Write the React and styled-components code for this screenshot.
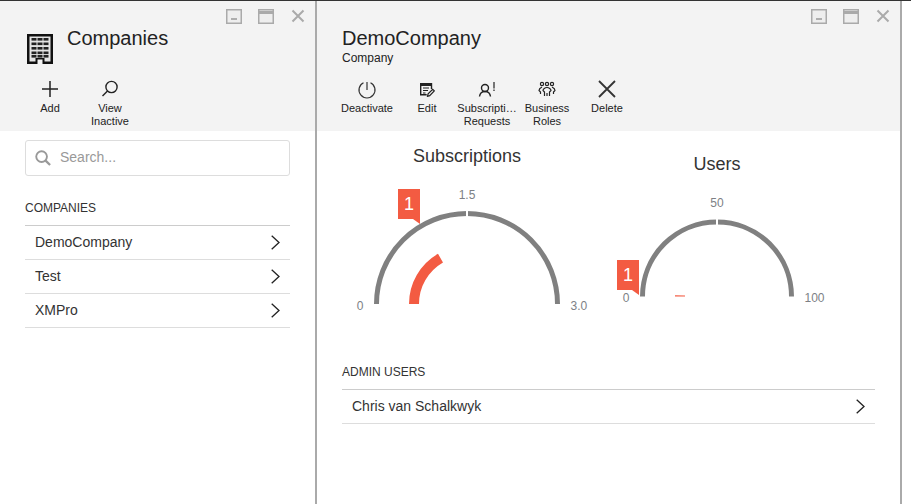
import React from 'react';
import styled, { createGlobalStyle } from 'styled-components';

const GlobalStyle = createGlobalStyle`
  html, body {
    margin: 0;
    padding: 0;
    height: 100%;
    overflow: hidden;
    background: #fff;
    font-family: 'Liberation Sans', Arial, sans-serif;
    color: #333;
  }
  #root {
    height: 100%;
  }
`;

const Page = styled.div`
  display: flex;
  width: 911px;
  height: 504px;
  box-sizing: border-box;
  border-top: 1px solid #333;
`;
const Panel = styled.section`
  display: flex;
  flex-direction: column;
  box-sizing: border-box;
  width: ${p => p.$width}px;
  border-right: 2px solid #aaa;
`;
const Header = styled.header`
  display: flex;
  flex-direction: column;
  box-sizing: border-box;
  height: 130px;
  flex: none;
  padding: 7px 0 0 25px;
  background: #f3f3f3;
`;
const WindowBar = styled.div`
  display: flex;
  justify-content: flex-end;
  align-items: center;
  gap: 16px;
  height: 16px;
  padding-right: 10px;
`;
const CloseGlyph = styled.svg`
  margin-left: 1px;
`;
const TitleRow = styled.div`
  display: flex;
  align-items: flex-start;
  gap: 14px;
  height: 44px;
  margin-top: 3px;
  padding-left: ${p => (p.$icon ? 2 : 0)}px;
`;
const BuildingBox = styled.div`
  padding-top: 7px;
  line-height: 0;
`;
const TitleText = styled.div`
  display: flex;
  flex-direction: column;
`;
const Title = styled.h1`
  margin: 0;
  font-size: 20px;
  font-weight: 400;
  line-height: 23px;
  color: #222;
`;
const Subtitle = styled.div`
  font-size: 12px;
  line-height: 16px;
  color: #222;
`;
const Toolbar = styled.div`
  display: flex;
  margin-left: -5px;
  margin-top: 6px;
`;
const ToolButton = styled.div`
  display: flex;
  flex-direction: column;
  align-items: center;
  width: 60px;
`;
const ToolIcon = styled.div`
  display: flex;
  align-items: center;
  justify-content: center;
  height: 24px;
  margin-bottom: 1px;
`;
const ToolLabel = styled.div`
  white-space: nowrap;
  font-size: 11px;
  line-height: 13px;
  text-align: center;
  color: #222;
`;
const Body = styled.div`
  display: flex;
  flex-direction: column;
  padding: ${p => p.$top}px 25px 0;
`;
const SearchBox = styled.div`
  display: flex;
  align-items: center;
  gap: 9px;
  box-sizing: border-box;
  height: 36px;
  padding-left: 9px;
  border: 1px solid #ddd;
  border-radius: 3px;
`;
const SearchText = styled.span`
  padding-bottom: 2px;
  font-size: 14px;
  color: #999;
`;
const SectionLabel = styled.h2`
  margin: ${p => p.$top}px 0 10px;
  font-size: 12px;
  font-weight: 400;
  line-height: 14px;
  color: #333;
`;
const List = styled.div`
  border-top: 1px solid #ccc;
`;
const Row = styled.div`
  display: flex;
  align-items: center;
  justify-content: space-between;
  box-sizing: border-box;
  height: 34px;
  padding: 0 10px;
  border-bottom: 1px solid #ddd;
  font-size: 14px;
  color: #333;
`;
const RowName = styled.span`
  padding-bottom: 2px;
`;
const GaugeRow = styled.div`
  display: flex;
  align-items: center;
`;
const GaugeColumn = styled.div`
  display: flex;
  flex-direction: column;
  align-items: center;
  width: 250px;
`;
const GaugeTitle = styled.div`
  padding-bottom: 2px;
  font-size: 18px;
  line-height: 20px;
  color: #333;
`;
const GaugeBox = styled.div`
  position: relative;
  width: 250px;
  height: ${p => p.$height}px;
  line-height: 0;
`;
const Badge = styled.div`
  position: absolute;
  left: ${p => p.$left}px;
  top: ${p => p.$top}px;
  width: 22px;
  height: 30px;
  background: #f35b42;
  color: #fff;
  font-size: 18px;
  line-height: 30px;
  text-align: center;
  &::after {
    content: '';
    position: absolute;
    right: 0;
    top: 100%;
    width: 7px;
    height: 5px;
    background: #f35b42;
    clip-path: polygon(0 0, 100% 0, 100% 100%);
  }
`;
const GaugeLabel = styled.text`
  font-family: 'Liberation Sans', Arial, sans-serif;
  font-size: 12px;
  fill: #7d7f85;
`;

const WindowControls = () => (
  <WindowBar>
    <svg width="16" height="15" viewBox="0 0 16 15" fill="none" stroke="#aaa">
      <rect x="0.75" y="0.75" width="14.5" height="13.5" strokeWidth="1.5" fill="#eee" />
      <path d="M5 10h6" strokeWidth="1.5" stroke="#999" />
    </svg>
    <svg width="16" height="15" viewBox="0 0 16 15" fill="none" stroke="#aaa">
      <rect x="0.75" y="0.75" width="14.5" height="13.5" strokeWidth="1.5" fill="#eee" />
      <path d="M1 3.500h14" strokeWidth="3" />
    </svg>
    <CloseGlyph width="14" height="14" viewBox="0 0 14 14" fill="none" stroke="#aaa" strokeWidth="2">
      <path d="M1.500 1.500l11 11M12.500 1.500l-11 11" />
    </CloseGlyph>
  </WindowBar>
);

const Building = () => (
  <svg width="26" height="30" viewBox="0 0 26 30">
    <path fill="#111" d="M0 0h26v30H16v-5h-6v5H0z" />
    <rect x="2.5" y="2.5" width="21" height="25" fill="#e4e4e4" />
    <rect x="8.5" y="24" width="9" height="6" fill="#111" />
    <rect x="10.5" y="25.5" width="5" height="4.5" fill="#f3f3f3" />
    {[4, 8.5, 13, 17.5, 21].map(y =>
      [4.5, 10.5, 16.5].map(x => <rect key={`${x}-${y}`} x={x} y={y} width="5" height="2.6" fill="#222" />)
    )}
  </svg>
);

const icons = {
  add: (
    <svg width="18" height="18" viewBox="0 0 18 18" stroke="#222" strokeWidth="1.5">
      <path d="M9 1v16M1 9h16" />
    </svg>
  ),
  view: (
    <svg width="18" height="18" viewBox="0 0 18 18" fill="none" stroke="#222" strokeWidth="1.4">
      <circle cx="10.5" cy="7" r="5.6" />
      <path d="M6.5 11L1.5 16" />
    </svg>
  ),
  power: (
    <svg width="20" height="20" viewBox="0 0 20 20" fill="none" stroke="#333" strokeWidth="1.2">
      <path d="M6.5 3.800a8 8 0 1 0 7 0" />
      <path d="M10 3v8" />
    </svg>
  ),
  edit: (
    <svg width="16" height="16" viewBox="0 -1 16 16" fill="none" stroke="#222" strokeWidth="1.4">
      <path d="M12.5 7V1.700H1.700v11h6" />
      <path d="M1.500 3h11" strokeWidth="2" />
      <path d="M4 6h6M4 8.500h5M4 11h2.500" strokeWidth="1.200" />
      <path d="M8.500 14.300l.6-2.400 4.600-4.600 1.600 1.600-4.600 4.700z" strokeWidth="1.200" />
    </svg>
  ),
  request: (
    <svg width="18" height="18" viewBox="0 0 18 18" fill="none" stroke="#222" strokeWidth="1.4">
      <circle cx="7" cy="8" r="3.500" />
      <path d="M1.500 16.500c.4-3 2.600-5 5.500-5s5.100 2 5.500 5" />
      <path d="M16 2v6.500M16 9.500v1.500" strokeWidth="1.200" />
    </svg>
  ),
  roles: (
    <svg width="18" height="18" viewBox="0 0 18 18" fill="none" stroke="#222" strokeWidth="1.200">
      <circle cx="4" cy="4" r="1.600" />
      <circle cx="9" cy="4" r="1.600" />
      <circle cx="14" cy="4" r="1.600" />
      <path d="M2.500 14v-2L1 10.500c0-1.500 1-2.500 3-3.500M15.500 14v-2l1.500-1.500c0-1.500-1-2.500-3-3.500" />
      <path d="M6.500 16v-4L5 10.500c0-1.500 2-3 4-3s4 1.500 4 3l-1.500 1.500v4M9 13v3" />
    </svg>
  ),
  close: (
    <svg width="18" height="18" viewBox="0 0 18 18" stroke="#333" strokeWidth="1.800">
      <path d="M1 1l16 16M17 1L1 17" />
    </svg>
  ),
};

const Chevron = () => (
  <svg width="9" height="15" viewBox="0 0 9 15" fill="none" stroke="#222" strokeWidth="1.300">
    <path d="M0.700 0.700L8 7.500L0.700 14.300" />
  </svg>
);

const SearchIcon = () => (
  <svg width="16" height="16" viewBox="0 0 17 17" fill="none" stroke="#999" strokeWidth="2">
    <circle cx="7" cy="7" r="5.700" />
    <path d="M11 11l5 5" strokeWidth="2.400" />
  </svg>
);

const Tool = ({ icon, lines }) => (
  <ToolButton>
    <ToolIcon>{icons[icon]}</ToolIcon>
    {lines.map(line => <ToolLabel key={line}>{line}</ToolLabel>)}
  </ToolButton>
);

const arcPoint = (r, deg, cx, cy) => {
  const a = (deg * Math.PI) / 180;
  return [cx - r * Math.cos(a), cy - r * Math.sin(a)];
};

const arcPath = (r, from, to, cx, cy) => {
  const [x1, y1] = arcPoint(r, from, cx, cy);
  const [x2, y2] = arcPoint(r, to, cx, cy);
  return `M${x1} ${y1}A${r} ${r} 0 0 1 ${x2} ${y2}`;
};

const Gauge = ({ title, height, cy, radius, innerRadius, fraction, labelDrop, min, mid, max, badgeLeft, badgeTop }) => {
  const cx = 125;
  return (
    <GaugeColumn>
      <GaugeTitle>{title}</GaugeTitle>
      <GaugeBox $height={height}>
        <svg width="250" height={height} viewBox={`0 0 250 ${height}`} fill="none">
          <path d={arcPath(radius, 0, 180, cx, cy)} stroke="#808080" strokeWidth="5" />
          <path d={`M${cx} ${cy - radius - 4}v8`} stroke="#fff" strokeWidth="2" />
          <path d={arcPath(innerRadius, 0, fraction * 180, cx, cy)} stroke="#f35b42" strokeWidth="10" />
          <GaugeLabel x={cx - radius - 13} y={cy + labelDrop} textAnchor="end">{min}</GaugeLabel>
          <GaugeLabel x={cx} y={cy - radius - 15} textAnchor="middle">{mid}</GaugeLabel>
          <GaugeLabel x={cx + radius + 13} y={cy + labelDrop}>{max}</GaugeLabel>
        </svg>
        <Badge $left={badgeLeft} $top={badgeTop}>1</Badge>
      </GaugeBox>
    </GaugeColumn>
  );
};

const App = () => (
  <Page>
    <GlobalStyle />
    <Panel $width={317}>
      <Header>
        <WindowControls />
        <TitleRow $icon>
          <BuildingBox><Building /></BuildingBox>
          <Title>Companies</Title>
        </TitleRow>
        <Toolbar>
          <Tool icon="add" lines={['Add']} />
          <Tool icon="view" lines={['View', 'Inactive']} />
        </Toolbar>
      </Header>
      <Body $top={9}>
        <SearchBox>
          <SearchIcon />
          <SearchText>Search...</SearchText>
        </SearchBox>
        <SectionLabel $top={25}>COMPANIES</SectionLabel>
        <List>
          {['DemoCompany', 'Test', 'XMPro'].map(name => (
            <Row key={name}><RowName>{name}</RowName><Chevron /></Row>
          ))}
        </List>
      </Body>
    </Panel>
    <Panel $width={585}>
      <Header>
        <WindowControls />
        <TitleRow>
          <TitleText>
            <Title>DemoCompany</Title>
            <Subtitle>Company</Subtitle>
          </TitleText>
        </TitleRow>
        <Toolbar>
          <Tool icon="power" lines={['Deactivate']} />
          <Tool icon="edit" lines={['Edit']} />
          <Tool icon="request" lines={['Subscripti…', 'Requests']} />
          <Tool icon="roles" lines={['Business', 'Roles']} />
          <Tool icon="close" lines={['Delete']} />
        </Toolbar>
      </Header>
      <Body $top={15}>
        <GaugeRow>
          <Gauge title="Subscriptions" height={144} cy={136} radius={90.5} innerRadius={53} fraction={1 / 3} labelDrop={6} min="0" mid="1.5" max="3.0" badgeLeft={56} badgeTop={21} />
          <Gauge title="Users" height={128} cy={120.5} radius={74.5} innerRadius={37} fraction={0.01} labelDrop={5} min="0" mid="50" max="100" badgeLeft={25} badgeTop={84} />
        </GaugeRow>
        <SectionLabel $top={53}>ADMIN USERS</SectionLabel>
        <List>
          <Row><RowName>Chris van Schalkwyk</RowName><Chevron /></Row>
        </List>
      </Body>
    </Panel>
  </Page>
);

export default App;
